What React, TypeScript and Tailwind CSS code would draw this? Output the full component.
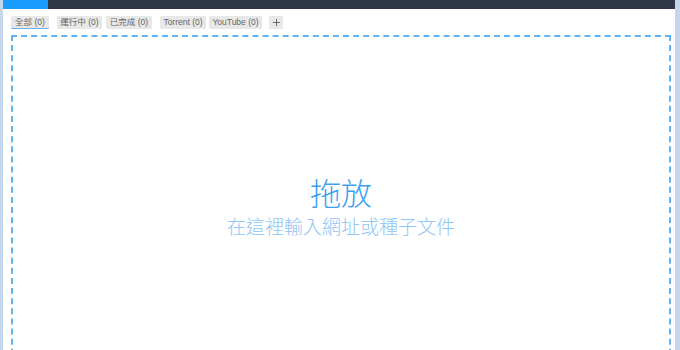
import { Plus } from "lucide-react";

const tabs = [
  { label: "全部 (0)", w: "w-[38px]", ml: "ml-0", active: true },
  { label: "運行中 (0)", w: "w-[45px]", ml: "ml-[8px]" },
  { label: "已完成 (0)", w: "w-[46px]", ml: "ml-[4px]" },
  { label: "Torrent (0)", w: "w-[46px]", ml: "ml-[8px]" },
  { label: "YouTube (0)", w: "w-[53px]", ml: "ml-[3px]" },
];

export default function App() {
  return (
    <div
      className="flex h-[350px] w-[680px] overflow-hidden bg-white"
      style={{ fontFamily: '"Liberation Sans", "Noto Sans CJK TC", sans-serif' }}
    >
      <div className="w-[3px] shrink-0 bg-[#c3d6ec]" />
      <div className="flex flex-1 flex-col">
        <div className="flex h-[9px] shrink-0 bg-[#2f3747]">
          <div className="w-[45px] bg-[#1a9cff]" />
        </div>
        <div className="flex shrink-0 items-center pl-[8px] pt-[7px]">
          {tabs.map((t) => (
            <div
              key={t.label}
              className={`${t.w} ${t.ml} flex h-[13px] items-center justify-center whitespace-nowrap rounded-[1px] bg-[#e8e8e8] text-[8.5px] text-[#666] ${
                t.active ? "border-b-[1.5px] border-[#6aaef0]" : ""
              }`}
            >
              {t.label}
            </div>
          ))}
          <div className="ml-[7px] flex h-[13px] w-[14px] items-center justify-center rounded-[1px] bg-[#e8e8e8] text-[#444]">
            <Plus size={11} strokeWidth={1.6} />
          </div>
        </div>
        <div className="ml-[8px] mr-[4px] mt-[6px] flex h-[340px] shrink-0 flex-col items-center justify-center border-2 border-dashed border-[#5db3f5]">
          <div
            className="text-[31px] font-light leading-[42px] text-[#3c9ff0]"
            style={{ fontFamily: '"Noto Sans CJK TC", sans-serif' }}
          >
            拖放
          </div>
          <div
            className="text-[19px] font-light leading-[26px] text-[#8fc6f3]"
            style={{ fontFamily: '"Noto Sans CJK TC", sans-serif' }}
          >
            在這裡輸入網址或種子文件
          </div>
        </div>
      </div>
      <div className="w-[5px] shrink-0 bg-[#c3d6ec]" />
    </div>
  );
}
